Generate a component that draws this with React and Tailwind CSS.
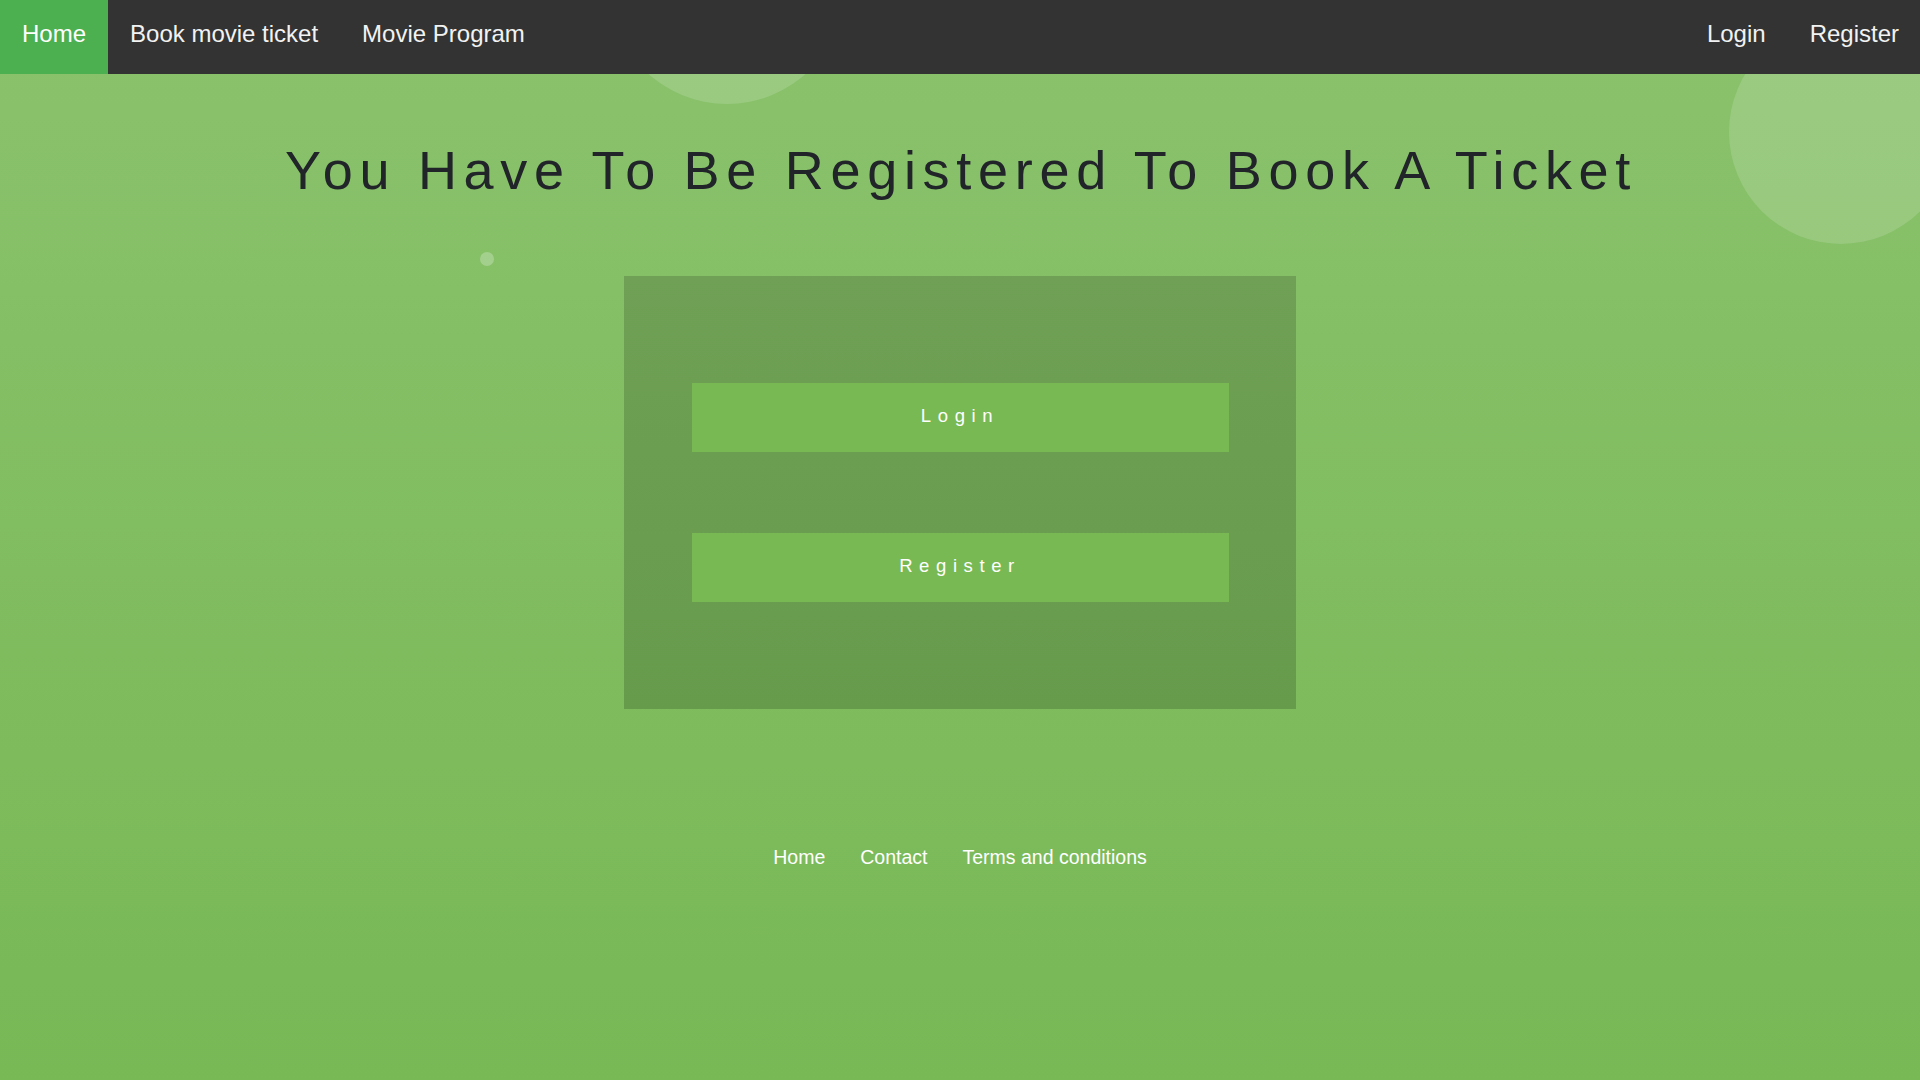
const NAV_LEFT = ['Home', 'Book movie ticket', 'Movie Program']
const NAV_RIGHT = ['Login', 'Register']
const FOOTER_LINKS = ['Home', 'Contact', 'Terms and conditions']

export default function App() {
  return (
    <div
      className="relative h-screen w-full overflow-hidden bg-gradient-to-b from-[#8ac26c] to-[#78b855]"
      style={{ fontFamily: '"Liberation Sans", Arial, sans-serif' }}
    >
      {/* floating bubbles */}
      <div className="absolute left-[609px] top-[-132px] h-[236px] w-[236px] rounded-full bg-white/15" />
      <div className="absolute left-[1729px] top-[20px] h-[224px] w-[224px] rounded-full bg-white/15" />
      <div className="absolute left-[480px] top-[252px] h-[14px] w-[14px] rounded-full bg-white/25" />

      {/* Top nav */}
      <nav className="relative z-10 flex h-[74px] items-center bg-[#333333] text-[24px] text-[#f2f2f2]">
        {NAV_LEFT.map((item, i) => (
          <a
            key={item}
            href="#"
            className={`flex h-full items-center px-[22px] pb-[6px] ${i === 0 ? 'bg-[#4caf50] text-white' : ''}`}
          >
            {item}
          </a>
        ))}
        <div className="ml-auto flex h-full">
          {NAV_RIGHT.map((item) => (
            <a key={item} href="#" className="flex h-full items-center px-[22px] pb-[6px] last:pr-[21px]">
              {item}
            </a>
          ))}
        </div>
      </nav>

      <main className="relative flex flex-col items-center">
        <h1 className="mt-[65px] pl-[2px] text-[54px] leading-[62px] tracking-[6.7px] text-[#212428]">
          You Have To Be Registered To Book A Ticket
        </h1>

        {/* Auth box */}
        <div className="mt-[75px] flex h-[433px] w-[672px] flex-col items-center justify-center gap-[81px] bg-gradient-to-b from-[#6fa055] to-[#679b4c]">
          <button className="flex h-[69px] w-[537px] items-center justify-center bg-[#78b954] pb-[3px] text-[18.5px] tracking-[6.6px] text-white">
            Login
          </button>
          <button className="flex h-[69px] w-[537px] items-center justify-center bg-[#78b954] pb-[3px] text-[18.5px] tracking-[6.6px] text-white">
            Register
          </button>
        </div>

        {/* Footer */}
        <footer className="mt-[137px] flex gap-[35px] text-[19.5px] leading-[22px] text-white">
          {FOOTER_LINKS.map((link) => (
            <a key={link} href="#">
              {link}
            </a>
          ))}
        </footer>
      </main>
    </div>
  )
}
